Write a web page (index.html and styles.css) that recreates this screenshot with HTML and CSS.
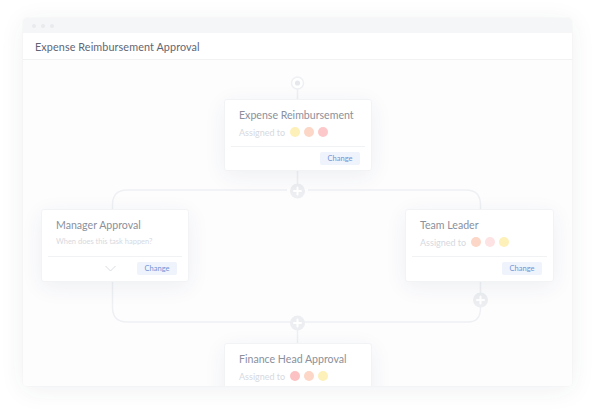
FILE: index.html
```html
<!DOCTYPE html>
<html>
<head>
<meta charset="utf-8">
<link rel="stylesheet" href="styles.css">
</head>
<body>
<div class="window">
  <div class="titlebar">
    <span class="dot"></span><span class="dot"></span><span class="dot"></span>
  </div>
  <div class="header">Expense Reimbursement Approval</div>
  <div class="canvas">
    <svg class="wires" width="549" height="326" viewBox="0 0 549 326">
      <g fill="none" stroke="#eef0f3" stroke-width="1.5">
        <line x1="274.5" y1="29" x2="274.5" y2="40"/>
        <line x1="274.5" y1="110" x2="274.5" y2="124"/>
        <path d="M 264 130 L 104 130 Q 89.5 130 89.5 145 L 89.5 247 Q 89.5 262 104 262 L 445 262 Q 457.5 262 457.5 248 L 457.5 145 Q 457.5 130 443 130 L 285 130"/>
        <line x1="274.5" y1="268" x2="274.5" y2="284"/>
      </g>
      <circle cx="274.5" cy="23" r="6" fill="#fff" stroke="#eef0f3" stroke-width="1.5"/>
      <circle cx="274.5" cy="23" r="2.6" fill="#e6e8ec"/>
      <g class="plus">
        <circle cx="274.5" cy="131" r="7.5" fill="#eceef1"/>
        <path d="M274.5 127.5 V134.5 M271 131 H278" stroke="#fff" stroke-width="2" stroke-linecap="round"/>
      </g>
      <g class="plus">
        <circle cx="457.5" cy="240" r="7.5" fill="#eceef1"/>
        <path d="M457.5 236.5 V243.5 M454 240 H461" stroke="#fff" stroke-width="2" stroke-linecap="round"/>
      </g>
      <g class="plus">
        <circle cx="274.5" cy="263" r="7.5" fill="#eceef1"/>
        <path d="M274.5 259.5 V266.5 M271 263 H278" stroke="#fff" stroke-width="2" stroke-linecap="round"/>
      </g>
    </svg>

    <div class="card card-top">
      <div class="card-title">Expense Reimbursement</div>
      <div class="assigned">Assigned to
        <span class="av yellow"></span><span class="av peach"></span><span class="av pink"></span>
      </div>
      <div class="card-foot"><span class="btn">Change</span></div>
    </div>

    <div class="card card-left">
      <div class="card-title">Manager Approval</div>
      <div class="question">When does this task happen?</div>
      <div class="card-foot foot-split">
        <svg class="chev" width="11" height="7" viewBox="0 0 11 7"><path d="M0.5 1 L5.5 6 L10.5 1" fill="none" stroke="#d9dce2" stroke-width="1"/></svg>
        <span class="btn">Change</span>
      </div>
    </div>

    <div class="card card-right">
      <div class="card-title">Team Leader</div>
      <div class="assigned">Assigned to
        <span class="av peach"></span><span class="av lightpink"></span><span class="av yellow"></span>
      </div>
      <div class="card-foot"><span class="btn">Change</span></div>
    </div>

    <div class="card card-bottom">
      <div class="card-title">Finance Head Approval</div>
      <div class="assigned">Assigned to
        <span class="av red"></span><span class="av peach"></span><span class="av yellow"></span>
      </div>
    </div>
  </div>
</div>
</body>
</html>
```

FILE: styles.css
```css
html, body {
  margin: 0;
  padding: 0;
  background: #ffffff;
}
body {
  width: 596px;
  height: 414px;
  overflow: hidden;
  font-family: Lato, "Open Sans", sans-serif;
  padding: 18px 0 0 23px;
  box-sizing: border-box;
}
.window {
  width: 549px;
  height: 368px;
  display: flex;
  flex-direction: column;
  border-radius: 4px;
  overflow: hidden;
  background: #fdfdfe;
  box-shadow: 0 4px 26px rgba(40, 50, 80, 0.07), 0 0 0 1px rgba(40, 50, 80, 0.015);
}
.titlebar {
  height: 15px;
  background: #f5f6f8;
  display: flex;
  align-items: center;
  gap: 5px;
  padding-left: 9px;
}
.dot {
  width: 4px;
  height: 4px;
  border-radius: 50%;
  background: #e8eaee;
}
.header {
  height: 26px;
  background: #fff;
  border-bottom: 1px solid #f1f2f4;
  display: flex;
  align-items: center;
  padding-left: 12px;
  font-size: 10.8px;
  color: #5f6673;
  letter-spacing: 0.1px;
}
.canvas {
  position: relative;
  flex: 1;
  background: #fdfdfe;
}
.wires {
  position: absolute;
  left: 0;
  top: 0;
}
.card {
  position: absolute;
  width: 148px;
  box-sizing: border-box;
  background: #fff;
  border: 1px solid #f2f3f5;
  border-radius: 3px;
  box-shadow: 0 5px 22px rgba(40, 50, 80, 0.07);
  padding: 8px 6px 0 6px;
}
.card-title {
  font-size: 10.6px;
  color: #8a909c;
  padding-left: 8px;
  height: 14px;
  line-height: 14px;
}
.assigned {
  display: flex;
  align-items: center;
  font-size: 9px;
  color: #d6d9df;
  padding-left: 8px;
  margin-top: 4px;
  height: 12px;
}
.av {
  width: 10px;
  height: 10px;
  border-radius: 50%;
  margin-left: 4px;
}
.assigned > .av:nth-of-type(1) { margin-left: 5px; }
.yellow { background: #fdf0b9; }
.peach { background: #fcd6c6; }
.pink { background: #fcc8c9; }
.lightpink { background: #fde3e3; }
.red { background: #fcc2c3; }
.question {
  font-size: 7.5px;
  color: #d6d9df;
  padding-left: 8px;
  margin-top: 4px;
  height: 12px;
  line-height: 12px;
}
.card-foot {
  margin-top: 8px;
  border-top: 1px solid #f1f2f4;
  height: 23px;
  display: flex;
  align-items: center;
  justify-content: flex-end;
  padding-right: 5px;
}
.foot-split {
  gap: 21px;
}
.chev {
  display: block;
}
.btn {
  display: inline-flex;
  align-items: center;
  justify-content: center;
  width: 40px;
  height: 13px;
  background: #eff3fb;
  border-radius: 2px;
  font-size: 7.5px;
  color: #7193d6;
}
.card-top { left: 201px; top: 39px; height: 72px; }
.card-left { left: 18px; top: 149px; height: 73px; }
.card-right { left: 382px; top: 149px; height: 73px; width: 149px; }
.card-bottom { left: 201px; top: 283px; height: 72px; }
```
